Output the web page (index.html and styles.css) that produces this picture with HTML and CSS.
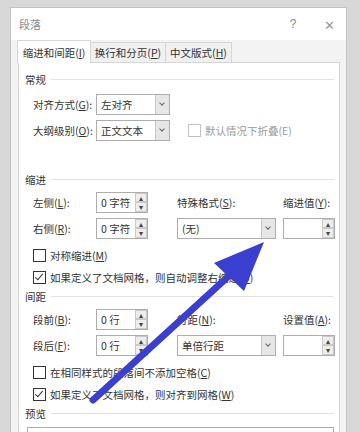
FILE: index.html
```html
<!DOCTYPE html>
<html lang="zh-CN">
<head>
    <meta charset="UTF-8">
    <meta name="viewport" content="width=device-width, initial-scale=1.0">
    <title>段落</title>
    <link rel="stylesheet" href="styles.css">
</head>
<body>
    <div class="dialog">
        <div class="titlebar">
            <span class="title">段落</span>
            <span class="help">?</span>
            <span class="close">✕</span>
        </div>

        <div class="tabs">
            <div class="tab active">缩进和间距(<u>I</u>)</div>
            <div class="tab">换行和分页(<u>P</u>)</div>
            <div class="tab">中文版式(<u>H</u>)</div>
        </div>

        <div class="panel">
            <div class="section-title">常规</div>
            <div class="grid general">
                <span class="label">对齐方式(<u>G</u>):</span>
                <div class="select narrow"><span>左对齐</span><i class="drop"></i></div>
                <span></span>
                <span class="label">大纲级别(<u>O</u>):</span>
                <div class="select narrow"><span>正文文本</span><i class="drop"></i></div>
                <label class="check disabled"><span class="box"></span>默认情况下折叠(E)</label>
            </div>

            <div class="section-title gap">缩进</div>
            <div class="grid indent">
                <span class="label">左侧(<u>L</u>):</span>
                <div class="spin"><span>0 字符</span><i class="arrows"><b>▴</b><b>▾</b></i></div>
                <span class="label">特殊格式(<u>S</u>):</span>
                <span class="label">缩进值(<u>Y</u>):</span>
                <span class="label">右侧(<u>R</u>):</span>
                <div class="spin"><span>0 字符</span><i class="arrows"><b>▴</b><b>▾</b></i></div>
                <div class="select"><span>(无)</span><i class="drop"></i></div>
                <div class="spin"><span></span><i class="arrows"><b>▴</b><b>▾</b></i></div>
            </div>
            <label class="check row first"><span class="box"></span>对称缩进(<u>M</u>)</label>
            <label class="check row"><span class="box checked"></span>如果定义了文档网格，则自动调整右缩进(<u>D</u>)</label>

            <div class="section-title">间距</div>
            <div class="grid indent">
                <span class="label">段前(<u>B</u>):</span>
                <div class="spin"><span>0 行</span><i class="arrows"><b>▴</b><b>▾</b></i></div>
                <span class="label">行距(<u>N</u>):</span>
                <span class="label">设置值(<u>A</u>):</span>
                <span class="label">段后(<u>F</u>):</span>
                <div class="spin"><span>0 行</span><i class="arrows"><b>▴</b><b>▾</b></i></div>
                <div class="select"><span>单倍行距</span><i class="drop"></i></div>
                <div class="spin"><span></span><i class="arrows"><b>▴</b><b>▾</b></i></div>
            </div>
            <label class="check row first"><span class="box"></span>在相同样式的段落间不添加空格(<u>C</u>)</label>
            <label class="check row"><span class="box checked"></span>如果定义了文档网格，则对齐到网格(<u>W</u>)</label>

            <div class="section-title">预览</div>
            <div class="preview"></div>
        </div>
    </div>

    <!-- annotation arrow drawn over the screenshot -->
    <svg class="pointer" width="360" height="432" viewBox="0 0 360 432">
        <line x1="93" y1="400" x2="231" y2="274" stroke="#3a3fcf" stroke-width="7" stroke-linecap="round"/>
        <polygon points="264,242 214,263 244,291" fill="#3a3fcf"/>
    </svg>
</body>
</html>
```

FILE: styles.css
```css
body {
    margin: 0;
    width: 360px;
    height: 432px;
    overflow: hidden;
    background: #d8d8d8;
    font-family: "Noto Sans CJK SC", "Noto Sans", sans-serif;
    font-size: 10.5px;
    color: #333;
    position: relative;
}

u {
    text-decoration: underline;
    text-underline-offset: 1px;
}

.dialog {
    margin: 7px 0 0 10px;
    width: 337px;
    height: 425px;
    overflow: hidden;
    background: #f3f3f3;
    border: 1px solid #c4c4c4;
    border-bottom: none;
    box-sizing: border-box;
}

.titlebar {
    height: 32px;
    background: #fff;
    display: flex;
    align-items: center;
    padding: 0 0 0 8px;
    font-size: 11px;
}

.title {
    flex: 1;
    color: #8a8a8a;
}

.help {
    color: #888;
    width: 38px;
    text-align: center;
    font-family: "Liberation Sans", sans-serif;
    font-size: 12px;
}

.close {
    color: #999;
    width: 34px;
    text-align: center;
    font-size: 13px;
}

.tabs {
    display: flex;
    align-items: flex-end;
    padding-left: 7px;
    height: 22px;
}

.tab {
    height: 20px;
    line-height: 20px;
    background: #f0f0f0;
    border: 1px solid #d6d6d6;
    border-bottom: none;
    margin-left: -1px;
    text-align: center;
    box-sizing: border-box;
}

.tab:nth-child(1) { width: 74px; }
.tab:nth-child(2) { width: 76px; }
.tab:nth-child(3) { width: 67px; }

.tab.active {
    height: 23px;
    line-height: 23px;
    background: #fff;
    margin-bottom: -1px;
    position: relative;
}

.panel {
    margin-left: 7px;
    width: 322px;
    height: 400px;
    background: #fff;
    border: 1px solid #d6d6d6;
    padding: 8px 0 0 6px;
    box-sizing: border-box;
}

.section-title {
    display: flex;
    align-items: center;
    height: 16px;
    margin-right: 5px;
}

.section-title::after {
    content: "";
    flex: 1;
    border-top: 1px solid #e2e2e2;
    margin-left: 5px;
}

.section-title.gap {
    margin-top: 28px;
}

.grid {
    display: grid;
    align-items: center;
    padding-left: 8px;
}

.grid.general {
    margin-top: 4px;
    grid-template-columns: 63px 83px 160px;
    grid-auto-rows: 26px;
}

.grid.indent {
    grid-template-columns: 63px 81px 106px 54px;
    grid-auto-rows: 26px;
    margin-top: 2px;
}

.label {
    white-space: nowrap;
}

.select {
    height: 21px;
    border: 1px solid #adadad;
    background: #fff;
    display: flex;
    align-items: center;
    box-sizing: border-box;
    width: 99px;
}

.select.narrow {
    width: 74px;
}

.select span {
    flex: 1;
    padding-left: 4px;
}

.drop {
    width: 13px;
    height: 19px;
    background: #e6e6e6;
    border-left: 1px solid #c6c6c6;
    position: relative;
}

.drop::after {
    content: "";
    position: absolute;
    left: 4px;
    top: 6px;
    width: 3px;
    height: 3px;
    border-right: 1px solid #666;
    border-bottom: 1px solid #666;
    transform: rotate(45deg);
}

.spin {
    width: 52px;
    height: 21px;
    border: 1px solid #adadad;
    box-sizing: border-box;
    background: #fff;
    display: flex;
    align-items: center;
}

.spin span {
    flex: 1;
    padding-left: 4px;
}

.arrows {
    width: 12px;
    height: 19px;
    display: flex;
    flex-direction: column;
    font-style: normal;
}

.arrows b {
    flex: 1;
    background: #ededed;
    border: 1px solid #c9c9c9;
    font-size: 8px;
    line-height: 7px;
    text-align: center;
    color: #444;
    font-weight: normal;
}

.check {
    display: flex;
    align-items: center;
    white-space: nowrap;
}

.check.row {
    height: 22px;
    padding-left: 8px;
}

.check.first {
    margin-top: 3px;
}

.box {
    width: 11px;
    height: 11px;
    border: 1px solid #333;
    background: #fff;
    margin-right: 4px;
    position: relative;
}

.box.checked::after {
    content: "";
    position: absolute;
    left: 3px;
    top: 0;
    width: 3px;
    height: 7px;
    border-right: 1px solid #333;
    border-bottom: 1px solid #333;
    transform: rotate(40deg);
}

.check.disabled {
    color: #9a9a9a;
    margin-left: 9px;
}

.check.disabled .box {
    border-color: #c2c2c2;
}

.preview {
    margin: 6px 5px 0 2px;
    height: 30px;
    border: 1px solid #adadad;
}

.pointer {
    position: absolute;
    left: 0;
    top: 0;
}
```
